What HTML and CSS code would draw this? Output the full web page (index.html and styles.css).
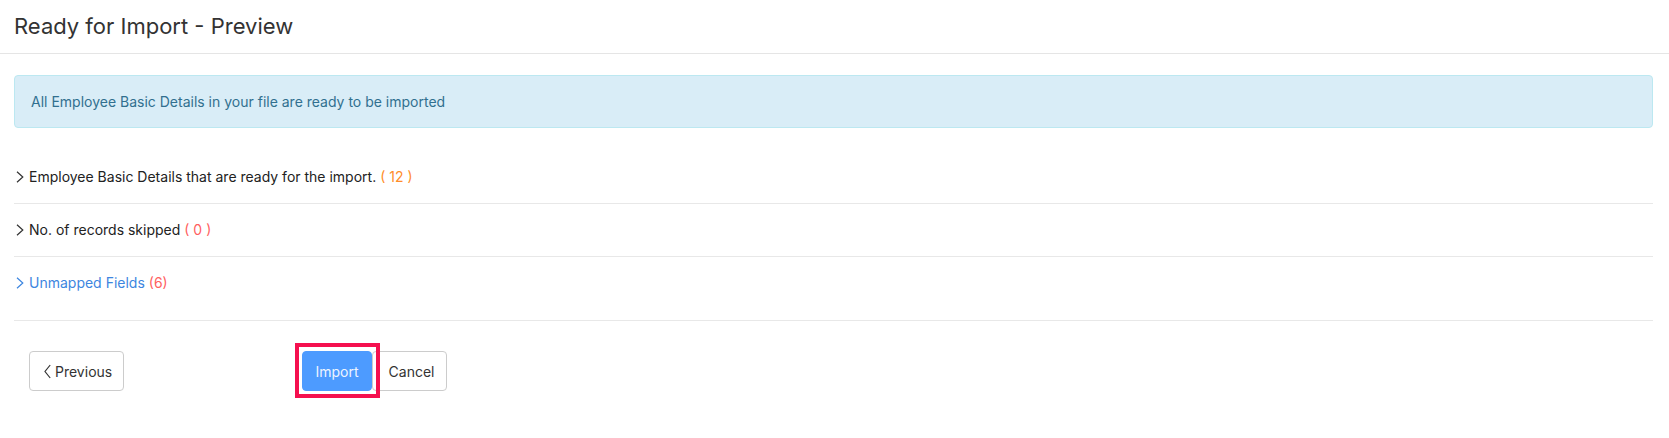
FILE: index.html
```html
<!DOCTYPE html>
<html>
<head>
<meta charset="utf-8">
<link rel="stylesheet" href="styles.css">
</head>
<body>
<div class="header"><h1 class="title">Ready for Import - Preview</h1></div>
<div class="content">
  <div class="alert">All Employee Basic Details in your file are ready to be imported</div>
  <div class="row">
    <svg class="chev" width="8" height="12" viewBox="0 0 8 12"><polyline points="1,0.8 6.8,6 1,11.2" fill="none" stroke="#333" stroke-width="1.2"/></svg>
    <span class="label">Employee Basic Details that are ready for the import.</span><span class="count orange">( 12 )</span>
  </div>
  <div class="row">
    <svg class="chev" width="8" height="12" viewBox="0 0 8 12"><polyline points="1,0.8 6.8,6 1,11.2" fill="none" stroke="#333" stroke-width="1.2"/></svg>
    <span class="label">No. of records skipped</span><span class="count red">( 0 )</span>
  </div>
  <div class="row last">
    <svg class="chev" width="8" height="12" viewBox="0 0 8 12"><polyline points="1,0.8 6.8,6 1,11.2" fill="none" stroke="#3d86e0" stroke-width="1.2"/></svg>
    <span class="label link">Unmapped Fields</span><span class="count red">(6)</span>
  </div>
  <div class="actions">
    <button class="btn btn-default prev"><svg class="pchev" width="7" height="15" viewBox="0 0 7 15"><polyline points="6.2,1 1,7.5 6.2,14" fill="none" stroke="#333" stroke-width="1.2"/></svg>Previous</button>
    <span class="highlight"><button class="btn btn-primary">Import</button></span><button class="btn btn-default cancel">Cancel</button>
  </div>
</div>
</body>
</html>
```
FILE: styles.css
```css
* { box-sizing: border-box; }
html, body { height: 100%; }
body {
  margin: 0;
  font-family: Inter, "Noto Sans", sans-serif;
  color: #333;
  background: #fff;
}
.header {
  height: 54px;
  border-bottom: 1px solid #e5e5e5;
  padding: 0 14px;
  display: flex;
  align-items: center;
}
.title {
  margin: 0;
  font-size: 22px;
  font-weight: 400;
  color: #333;
  padding-bottom: 2px;
}
.content {
  padding: 21px 16px 40px 14px;
}
.alert {
  background: #d9edf7;
  border: 1px solid #bce8f1;
  border-radius: 4px;
  color: #31708f;
  font-size: 14px;
  height: 53px;
  padding: 0 16px;
  display: flex;
  align-items: center;
  margin-bottom: 23px;
}
.row {
  height: 53px;
  border-bottom: 1px solid #e8e8e8;
  display: flex;
  align-items: center;
  font-size: 14px;
  padding-left: 2px;
  padding-bottom: 1px;
}
.row.last {
  height: 64px;
  padding-bottom: 12px;
}
.chev { margin-right: 5px; flex: none; }
.label { color: #222; }
.label.link { color: #3d86e0; }
.count { margin-left: 4px; }
.orange { color: #ff8d2a; }
.red { color: #ff5f5f; }
.actions {
  padding: 30px 0 0 15px;
  display: flex;
  align-items: center;
}
.btn {
  font-family: Inter, "Noto Sans", sans-serif;
  font-size: 14px;
  height: 40px;
  border-radius: 4px;
  padding: 0 12px;
  cursor: pointer;
  display: inline-flex;
  align-items: center;
}
.btn-default {
  background: #fff;
  border: 1px solid #ccc;
  color: #333;
}
.btn-primary {
  background: #4d9bff;
  border: 1px solid #4d9bff;
  color: #eef4ff;
  width: 70px;
  justify-content: center;
}
.prev { width: 95px; padding: 0 10px 0 14px; }
.pchev { margin-right: 4px; flex: none; }
.cancel { width: 75px; justify-content: center; padding-left: 16px; }
.highlight {
  position: relative;
  z-index: 2;
  display: inline-flex;
  border: 4px solid #f5104f;
  padding: 4px 4px 3px 3px;
  margin: -8px -8px -7px 171px;
}
```
